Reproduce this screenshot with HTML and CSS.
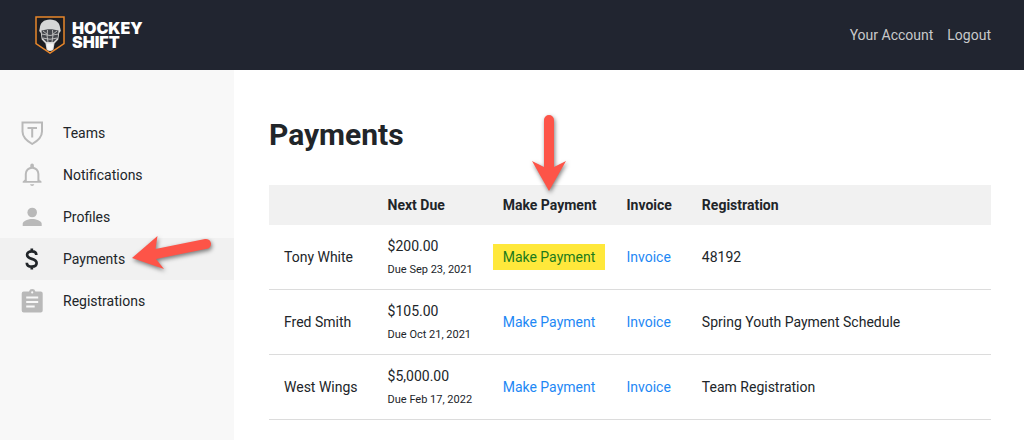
FILE: index.html
```html
<!DOCTYPE html>
<html lang="en">
<head>
    <meta charset="UTF-8">
    <meta name="viewport" content="width=device-width, initial-scale=1.0">
    <title>Payments - Hockey Shift</title>
    <link rel="stylesheet" href="styles.css">
</head>
<body>
    <header class="site-header">
        <a href="#" class="logo">
            <svg class="logo-mark" viewBox="0 0 30 38" aria-hidden="true">
                <path d="M1 1h28v26.500L15 37 1 27.500z" fill="#1c1d22" stroke="#e8862a" stroke-width="1.500"/>
                <path d="M15 3.500C8.500 3.500 5.300 7 4.800 12L4.200 15l1.600 2 .9 6.500 3.800 4 1 6q3.500 3 7 0l1-6 3.800-4 .9-6.500 1.600-2-.6-3C24.700 7 21.500 3.500 15 3.500z" fill="#d6d6d6"/>
                <path d="M6.500 14.500l6.500-1.300h4l6.500 1.300-.8 7.500-4.200 4h-7l-4.200-4z" fill="#45474d"/>
                <path d="M6.500 18q8.500 3 17 0M7.500 22q7.500 2.500 15 0M12.500 14q-1 6 .5 12M17.500 14q1 6-.5 12M8 15l4.500 3.500M22 15l-4.500 3.500" fill="none" stroke="#c4c4c4" stroke-width=".9"/>
                <path d="M11.500 27.500h7l-1 6q-2.500 1.500-5 0z" fill="#f4f4f4"/>
            </svg>
            <span class="logo-text">HOCKEY<br>SHIFT</span>
        </a>
        <nav class="account-nav">
            <a href="#">Your Account</a>
            <a href="#">Logout</a>
        </nav>
    </header>

    <div class="page">
        <nav class="sidebar">
            <a href="#" class="nav-item">
                <svg class="nav-icon" viewBox="0 0 24 24" aria-hidden="true">
                    <path d="M2.500 1.500h19.500v9c0 5.500-4.500 9.500-9.800 12.500C7 20 2.500 16 2.500 10.500z" fill="none" stroke="currentColor" stroke-width="2"/>
                    <path d="M7.500 7h9.500M12.200 7v9.500" fill="none" stroke="currentColor" stroke-width="2"/>
                </svg>
                Teams
            </a>
            <a href="#" class="nav-item">
                <svg class="nav-icon" viewBox="0 0 24 24" aria-hidden="true">
                    <path d="M5.800 18v-7a6.300 6.300 0 0 1 12.600 0v7" fill="none" stroke="currentColor" stroke-width="2"/>
                    <path d="M10.300 4.500V2.300a1.800 1.800 0 0 1 3.600 0v2.200zM5 16.500L2.700 18.500v1.300h18.800v-1.300L19.300 16.500V18H5zM10 21.300h4.300a2.200 2 0 0 1-4.300 0z" fill="currentColor"/>
                </svg>
                Notifications
            </a>
            <a href="#" class="nav-item">
                <svg class="nav-icon" viewBox="0 0 24 24" aria-hidden="true">
                    <circle cx="12.200" cy="7.500" r="4.800" fill="currentColor"/>
                    <path d="M2.700 21v-2.300c0-3 6-4.700 9.500-4.700s9.500 1.700 9.500 4.700V21z" fill="currentColor"/>
                </svg>
                Profiles
            </a>
            <a href="#" class="nav-item active">
                <svg class="nav-icon" viewBox="0 0 24 24" aria-hidden="true">
                    <path d="M16.300 8c0-2.300-1.700-3.700-4.500-3.700S7.100 5.700 7.100 7.800c0 2.300 1.700 3.300 4.700 4.100 3.300.9 4.800 2 4.800 4.200 0 2.300-2 3.600-4.800 3.600-3 0-5-1.500-5-4M11.800 1.500v3M11.800 19.500v3" fill="none" stroke="currentColor" stroke-width="2.700"/>
                </svg>
                Payments
                <svg class="arrow arrow-left" viewBox="0 0 80 36" aria-hidden="true">
                    <path d="M0 20L25.500-2 23.500 11 73 1a5 5 0 0 1 2 9.800L24 21 32 31z" fill="#fd5448"/>
                </svg>
            </a>
            <a href="#" class="nav-item">
                <svg class="nav-icon" viewBox="0 0 24 24" aria-hidden="true">
                    <path fill-rule="evenodd" d="M3.700 2.500h5.300a3.300 3.300 0 0 1 6.400 0h5.300a2 2 0 0 1 2 2v17a2 2 0 0 1-2 2h-17a2 2 0 0 1-2-2v-17a2 2 0 0 1 2-2zM12.200 2.300a1.100 1.100 0 1 0 0 2.200 1.100 1.100 0 0 0 0-2.200zM6.200 7.500v2h12v-2zM6.200 12v2h12v-2zM6.200 16.500v2h8.500v-2z" fill="currentColor"/>
                </svg>
                Registrations
            </a>
        </nav>

        <main class="content">
            <h1>Payments</h1>
            <table class="payments">
                <thead>
                    <tr>
                        <th></th>
                        <th>Next Due</th>
                        <th class="make-payment">
                            Make Payment
                            <svg class="arrow arrow-down" viewBox="0 0 36 78" aria-hidden="true">
                                <path d="M18 77L1 47l12 6V6a5 5 0 0 1 10 0v47l12-6z" fill="#fd5448"/>
                            </svg>
                        </th>
                        <th>Invoice</th>
                        <th class="registration">Registration</th>
                    </tr>
                </thead>
                <tbody>
                    <tr>
                        <td>Tony White</td>
                        <td>$200.00<span class="due">Due Sep 23, 2021</span></td>
                        <td><a href="#" class="highlight">Make Payment</a></td>
                        <td><a href="#">Invoice</a></td>
                        <td>48192</td>
                    </tr>
                    <tr>
                        <td>Fred Smith</td>
                        <td>$105.00<span class="due">Due Oct 21, 2021</span></td>
                        <td><a href="#">Make Payment</a></td>
                        <td><a href="#">Invoice</a></td>
                        <td>Spring Youth Payment Schedule</td>
                    </tr>
                    <tr>
                        <td>West Wings</td>
                        <td>$5,000.00<span class="due">Due Feb 17, 2022</span></td>
                        <td><a href="#">Make Payment</a></td>
                        <td><a href="#">Invoice</a></td>
                        <td>Team Registration</td>
                    </tr>
                </tbody>
            </table>
        </main>
    </div>
</body>
</html>
```
FILE: styles.css
```css
* {
    box-sizing: border-box;
}

body {
    margin: 0;
    min-height: 100vh;
    display: flex;
    flex-direction: column;
    font-family: Roboto, sans-serif;
    font-size: 14px;
    line-height: 20px;
    color: #212529;
    background-color: #fff;
}

a {
    color: #1e88f5;
    text-decoration: none;
}

/* Header */
.site-header {
    display: flex;
    justify-content: space-between;
    align-items: center;
    height: 70px;
    padding: 0 33px 0 35px;
    background-color: #212530;
}

.logo {
    display: flex;
    align-items: center;
    gap: 7px;
    color: #fff;
}

.logo-mark {
    width: 30px;
    height: 38px;
}

.logo-text {
    font-family: Inter, sans-serif;
    font-size: 16px;
    font-weight: 900;
    line-height: 14px;
}

.account-nav {
    display: flex;
    gap: 14px;
}

.account-nav a {
    color: #c8c9cb;
}

/* Layout */
.page {
    display: flex;
    flex: 1;
}

.sidebar {
    flex: 0 0 234px;
    padding-top: 42px;
    background-color: #f8f8f8;
}

.content {
    flex: 1;
    padding: 45px 33px 20px 35px;
}

/* Sidebar */
.nav-item {
    position: relative;
    display: flex;
    align-items: center;
    gap: 19px;
    height: 42px;
    padding-left: 20px;
    color: #212529;
}

.nav-item.active {
    background-color: #f1f1f1;
}

.nav-icon {
    width: 24px;
    height: 24px;
    color: #b9b9b9;
}

.active .nav-icon {
    color: #212529;
}

/* Payments table */
h1 {
    margin: 0 0 30px;
    font-size: 30px;
    line-height: 40px;
}

.payments {
    width: 100%;
    border-collapse: separate;
    border-spacing: 0;
}

.payments th,
.payments td {
    padding: 10px 15px;
    text-align: left;
    white-space: nowrap;
}

.payments th {
    background-color: #f1f1f1;
}

.payments td {
    height: 65px;
    border-bottom: 1px solid #dcdcdc;
}

.payments .registration {
    width: 100%;
}

.make-payment {
    position: relative;
}

.due {
    display: block;
    padding-top: 6px;
    font-size: 11px;
    line-height: 16px;
}

.highlight {
    margin: 0 -10px;
    padding: 5px 10px;
    color: #1b7a1b;
    background-color: #ffe83b;
}

/* Arrows */
.arrow {
    position: absolute;
    overflow: visible;
    filter: drop-shadow(1px 2px 2px rgba(0, 0, 0, 0.5));
}

.arrow-left {
    left: 132px;
    top: 0;
    width: 80px;
    height: 36px;
}

.arrow-down {
    left: 43px;
    bottom: 33px;
    width: 36px;
    height: 78px;
}
```
